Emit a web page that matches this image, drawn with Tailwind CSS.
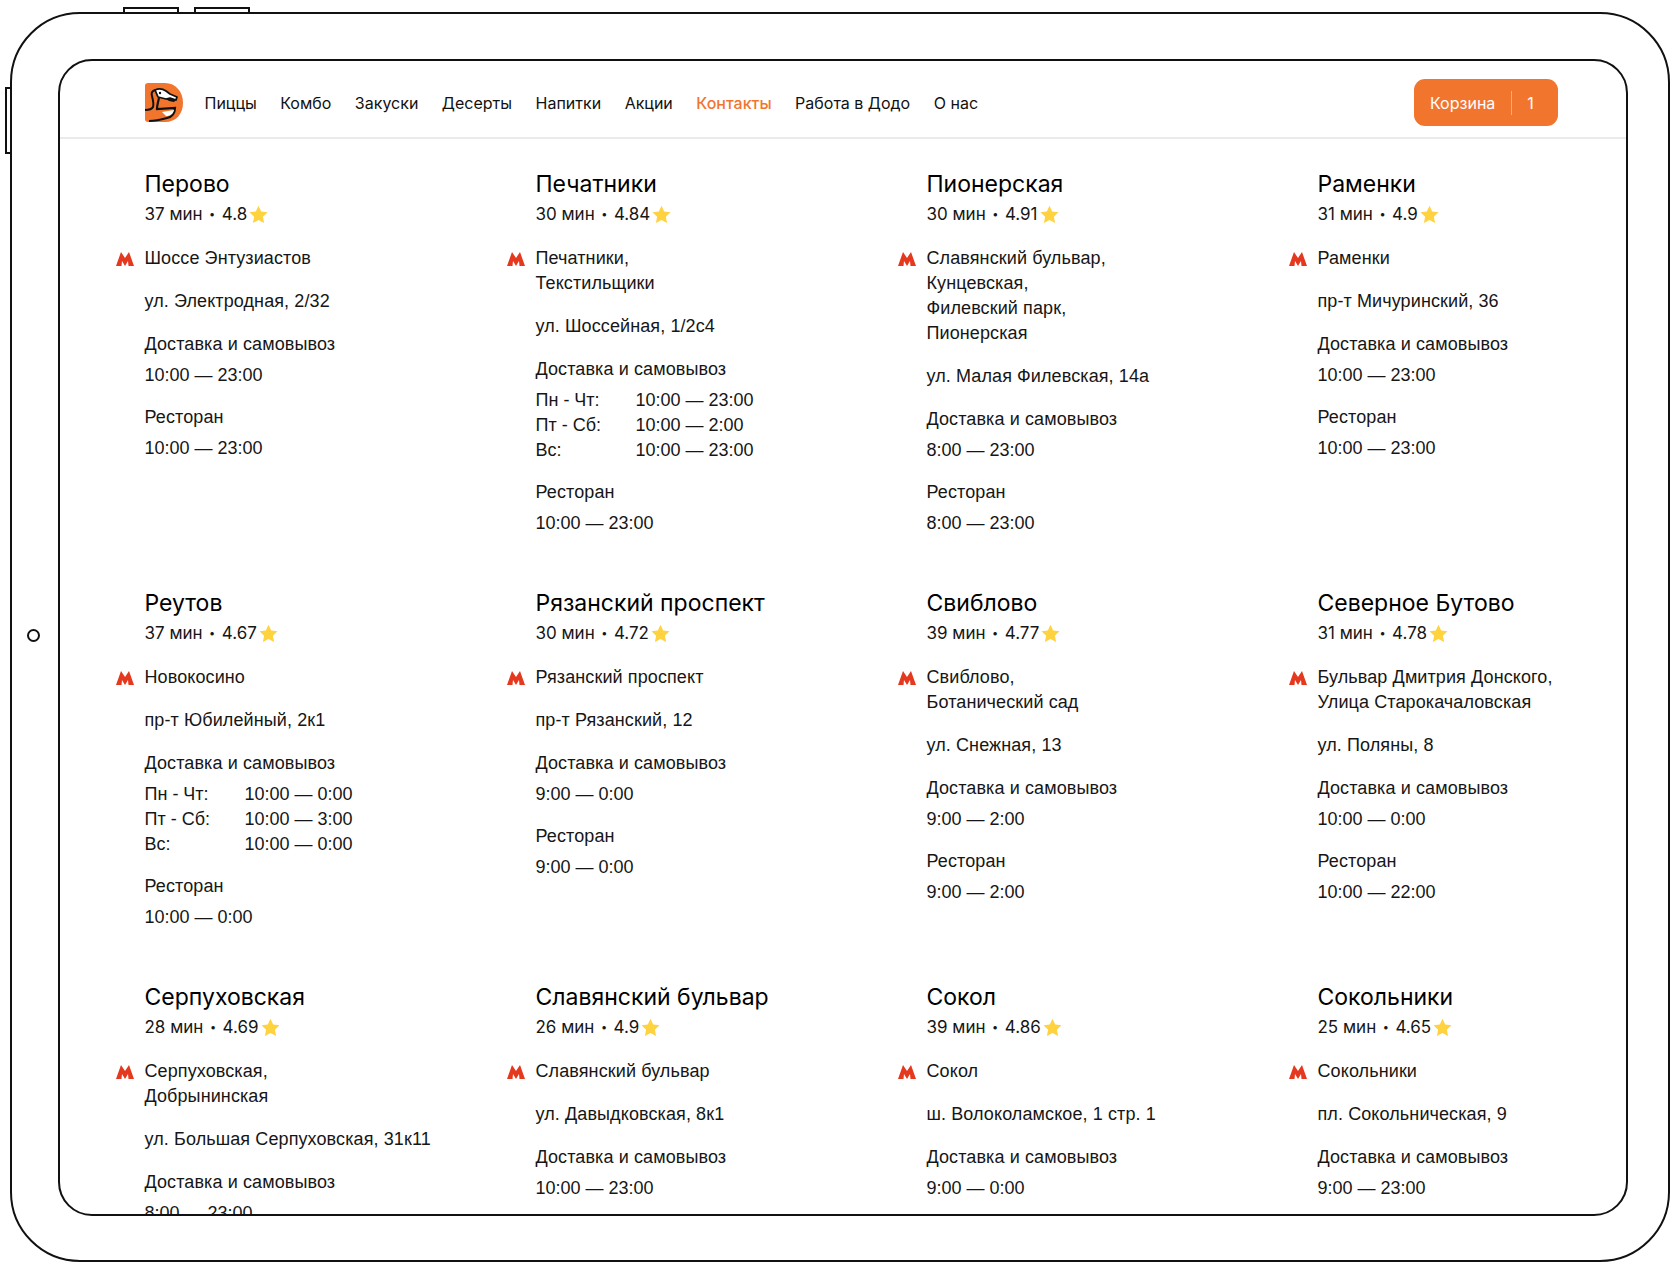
<!DOCTYPE html>
<html lang="ru">
    <head>
        <meta charset="UTF-8" />
        <meta name="viewport" content="width=device-width, initial-scale=1.0" />
        <title>Контакты</title>
        <script src="https://cdn.jsdelivr.net/npm/@tailwindcss/browser@4"></script>
    </head>
    <body class="bg-white h-[1275px] overflow-hidden font-['Liberation_Sans',sans-serif] text-[#161616]">
        <!-- Device frame -->
        <div class="relative ml-[10px] mt-[12px] w-[1660px] h-[1250px] border-2 border-[#111] rounded-[70px] pl-[46px] pt-[45px]">
            <div class="absolute left-[111px] top-[-7px] w-[56px] h-[6px] border-2 border-b-0 border-[#111]"></div>
            <div class="absolute left-[182px] top-[-7px] w-[56px] h-[6px] border-2 border-b-0 border-[#111]"></div>
            <div class="absolute left-[-7px] top-[73px] w-[6px] h-[67px] border-2 border-r-0 border-[#111]"></div>
            <div class="absolute left-[15px] top-[615px] w-[13px] h-[13px] border-2 border-[#111] rounded-full"></div>

            <!-- Screen -->
            <div class="w-[1570px] h-[1157px] border-2 border-[#111] rounded-[34px] overflow-hidden">
                <header class="flex items-center h-[78px] pt-[7px] pl-[84.5px] pr-[68px] border-b-2 border-[#ebebeb]">
                    <svg class="w-[38px] h-[40px] mr-[22px]" viewBox="0 0 38 40">
                        <path d="M3 0H20C31 0 38 9 38 20C38 31 31 39 20 39H3C1 39 0 38 0 36V3C0 1 1 0 3 0Z" fill="#f2752e" />
                        <path d="M10 7C14 5 18 6 21 8L25 11L32 14L31 17L25 15L21 16L13 14Z" fill="#fff" stroke="#111" stroke-width="1.800" stroke-linejoin="round" />
                        <path d="M21 16L25 15L31 17L29 19L24 18Z" fill="#111" />
                        <path d="M10 7C7 8 6 10 7 13C8 17 9 21 8 24C7 26 4 27 0 27" fill="none" stroke="#111" stroke-width="2" />
                        <path d="M14 15C13 19 12 23 12 26L30 25C30 30 27 34 22 35C15 37 9 38 4 38" fill="none" stroke="#111" stroke-width="2.200" />
                        <path d="M17 29L29 27C28 31 25 33 21 33Z" fill="#fff" />
                        <circle cx="15" cy="10" r="1.200" fill="#111" />
                    </svg>
                    <nav class="flex gap-[23.5px] text-[16px] font-['Inter',sans-serif] text-[#111]">
                        <a>Пиццы</a>
                        <a>Комбо</a>
                        <a>Закуски</a>
                        <a>Десерты</a>
                        <a>Напитки</a>
                        <a>Акции</a>
                        <a class="text-[#f2752e] font-medium">Контакты</a>
                        <a>Работа в Додо</a>
                        <a>О нас</a>
                    </nav>
                    <button class="ml-auto flex items-center w-[144px] h-[47px] pl-[16px] bg-[#f2752e] rounded-[11px] text-white text-[16px] font-['Inter',sans-serif]">
                        <span>Корзина</span>
                        <span class="ml-[16px] w-px h-[24px] bg-white/40"></span>
                        <span class="ml-[15px]">1</span>
                    </button>
                </header>

                <main class="grid grid-cols-[391px_391px_391px_391px] pl-[84.5px] pt-[30px] gap-y-[52px] text-[18px] leading-[25px] tracking-[0.1px]">
                    <!-- Row 1 -->
                    <section>
                        <h2 class="text-[23px] leading-[30px] font-['Inter',sans-serif] text-black tracking-normal">Перово</h2>
                        <p class="flex items-center gap-[3px] mt-[3px] text-[17px] font-['Inter',sans-serif] tracking-normal">37 мин <span class="text-[11px] mx-[3.5px]">•</span> 4.8 <svg class="w-[21px] h-[21px] -ml-[2px]" viewBox="0 0 24 24"><path d="M12 2l3.100 6.600 7.200 .9-5.300 5 1.400 7.200-6.400-3.500-6.400 3.500 1.400-7.200-5.300-5 7.200-.9z" fill="#ffd23f" /></svg></p>
                        <div class="relative mt-[19px]"><svg class="absolute left-[-29px] top-[6px] w-[18px] h-[14px]" viewBox="0 0 18 14"><path d="M0 14L5 0L9 6L13 0L18 14H12.500L12 9L9 14L6 9L5.500 14Z" fill="#e5391f" /></svg>Шоссе Энтузиастов</div>
                        <p class="mt-[18px]">ул. Электродная, 2/32</p>
                        <p class="mt-[18px]">Доставка и самовывоз</p>
                        <p class="mt-[6px] tracking-normal">10:00 — 23:00</p>
                        <p class="mt-[17px]">Ресторан</p>
                        <p class="mt-[6px] tracking-normal">10:00 — 23:00</p>
                    </section>
                    <section>
                        <h2 class="text-[23px] leading-[30px] font-['Inter',sans-serif] text-black tracking-normal">Печатники</h2>
                        <p class="flex items-center gap-[3px] mt-[3px] text-[17px] font-['Inter',sans-serif] tracking-normal">30 мин <span class="text-[11px] mx-[3.5px]">•</span> 4.84 <svg class="w-[21px] h-[21px] -ml-[2px]" viewBox="0 0 24 24"><path d="M12 2l3.100 6.600 7.200 .9-5.300 5 1.400 7.200-6.400-3.500-6.400 3.500 1.400-7.200-5.300-5 7.200-.9z" fill="#ffd23f" /></svg></p>
                        <div class="relative mt-[19px]"><svg class="absolute left-[-29px] top-[6px] w-[18px] h-[14px]" viewBox="0 0 18 14"><path d="M0 14L5 0L9 6L13 0L18 14H12.500L12 9L9 14L6 9L5.500 14Z" fill="#e5391f" /></svg>Печатники,<br />Текстильщики</div>
                        <p class="mt-[18px]">ул. Шоссейная, 1/2с4</p>
                        <p class="mt-[18px]">Доставка и самовывоз</p>
                        <div class="grid grid-cols-[100px_1fr] mt-[6px] tracking-normal"><span>Пн - Чт:</span><span>10:00 — 23:00</span><span>Пт - Сб:</span><span>10:00 — 2:00</span><span>Вс:</span><span>10:00 — 23:00</span></div>
                        <p class="mt-[17px]">Ресторан</p>
                        <p class="mt-[6px] tracking-normal">10:00 — 23:00</p>
                    </section>
                    <section>
                        <h2 class="text-[23px] leading-[30px] font-['Inter',sans-serif] text-black tracking-normal">Пионерская</h2>
                        <p class="flex items-center gap-[3px] mt-[3px] text-[17px] font-['Inter',sans-serif] tracking-normal">30 мин <span class="text-[11px] mx-[3.5px]">•</span> 4.91 <svg class="w-[21px] h-[21px] -ml-[2px]" viewBox="0 0 24 24"><path d="M12 2l3.100 6.600 7.200 .9-5.300 5 1.400 7.200-6.400-3.500-6.400 3.500 1.400-7.200-5.300-5 7.200-.9z" fill="#ffd23f" /></svg></p>
                        <div class="relative mt-[19px]"><svg class="absolute left-[-29px] top-[6px] w-[18px] h-[14px]" viewBox="0 0 18 14"><path d="M0 14L5 0L9 6L13 0L18 14H12.500L12 9L9 14L6 9L5.500 14Z" fill="#e5391f" /></svg>Славянский бульвар,<br />Кунцевская,<br />Филевский парк,<br />Пионерская</div>
                        <p class="mt-[18px]">ул. Малая Филевская, 14а</p>
                        <p class="mt-[18px]">Доставка и самовывоз</p>
                        <p class="mt-[6px] tracking-normal">8:00 — 23:00</p>
                        <p class="mt-[17px]">Ресторан</p>
                        <p class="mt-[6px] tracking-normal">8:00 — 23:00</p>
                    </section>
                    <section>
                        <h2 class="text-[23px] leading-[30px] font-['Inter',sans-serif] text-black tracking-normal">Раменки</h2>
                        <p class="flex items-center gap-[3px] mt-[3px] text-[17px] font-['Inter',sans-serif] tracking-normal">31 мин <span class="text-[11px] mx-[3.5px]">•</span> 4.9 <svg class="w-[21px] h-[21px] -ml-[2px]" viewBox="0 0 24 24"><path d="M12 2l3.100 6.600 7.200 .9-5.300 5 1.400 7.200-6.400-3.500-6.400 3.500 1.400-7.200-5.300-5 7.200-.9z" fill="#ffd23f" /></svg></p>
                        <div class="relative mt-[19px]"><svg class="absolute left-[-29px] top-[6px] w-[18px] h-[14px]" viewBox="0 0 18 14"><path d="M0 14L5 0L9 6L13 0L18 14H12.500L12 9L9 14L6 9L5.500 14Z" fill="#e5391f" /></svg>Раменки</div>
                        <p class="mt-[18px]">пр-т Мичуринский, 36</p>
                        <p class="mt-[18px]">Доставка и самовывоз</p>
                        <p class="mt-[6px] tracking-normal">10:00 — 23:00</p>
                        <p class="mt-[17px]">Ресторан</p>
                        <p class="mt-[6px] tracking-normal">10:00 — 23:00</p>
                    </section>

                    <!-- Row 2 -->
                    <section>
                        <h2 class="text-[23px] leading-[30px] font-['Inter',sans-serif] text-black tracking-normal">Реутов</h2>
                        <p class="flex items-center gap-[3px] mt-[3px] text-[17px] font-['Inter',sans-serif] tracking-normal">37 мин <span class="text-[11px] mx-[3.5px]">•</span> 4.67 <svg class="w-[21px] h-[21px] -ml-[2px]" viewBox="0 0 24 24"><path d="M12 2l3.100 6.600 7.200 .9-5.300 5 1.400 7.200-6.400-3.500-6.400 3.500 1.400-7.200-5.300-5 7.200-.9z" fill="#ffd23f" /></svg></p>
                        <div class="relative mt-[19px]"><svg class="absolute left-[-29px] top-[6px] w-[18px] h-[14px]" viewBox="0 0 18 14"><path d="M0 14L5 0L9 6L13 0L18 14H12.500L12 9L9 14L6 9L5.500 14Z" fill="#e5391f" /></svg>Новокосино</div>
                        <p class="mt-[18px]">пр-т Юбилейный, 2к1</p>
                        <p class="mt-[18px]">Доставка и самовывоз</p>
                        <div class="grid grid-cols-[100px_1fr] mt-[6px] tracking-normal"><span>Пн - Чт:</span><span>10:00 — 0:00</span><span>Пт - Сб:</span><span>10:00 — 3:00</span><span>Вс:</span><span>10:00 — 0:00</span></div>
                        <p class="mt-[17px]">Ресторан</p>
                        <p class="mt-[6px] tracking-normal">10:00 — 0:00</p>
                    </section>
                    <section>
                        <h2 class="text-[23px] leading-[30px] font-['Inter',sans-serif] text-black tracking-normal">Рязанский проспект</h2>
                        <p class="flex items-center gap-[3px] mt-[3px] text-[17px] font-['Inter',sans-serif] tracking-normal">30 мин <span class="text-[11px] mx-[3.5px]">•</span> 4.72 <svg class="w-[21px] h-[21px] -ml-[2px]" viewBox="0 0 24 24"><path d="M12 2l3.100 6.600 7.200 .9-5.300 5 1.400 7.200-6.400-3.500-6.400 3.500 1.400-7.200-5.300-5 7.200-.9z" fill="#ffd23f" /></svg></p>
                        <div class="relative mt-[19px]"><svg class="absolute left-[-29px] top-[6px] w-[18px] h-[14px]" viewBox="0 0 18 14"><path d="M0 14L5 0L9 6L13 0L18 14H12.500L12 9L9 14L6 9L5.500 14Z" fill="#e5391f" /></svg>Рязанский проспект</div>
                        <p class="mt-[18px]">пр-т Рязанский, 12</p>
                        <p class="mt-[18px]">Доставка и самовывоз</p>
                        <p class="mt-[6px] tracking-normal">9:00 — 0:00</p>
                        <p class="mt-[17px]">Ресторан</p>
                        <p class="mt-[6px] tracking-normal">9:00 — 0:00</p>
                    </section>
                    <section>
                        <h2 class="text-[23px] leading-[30px] font-['Inter',sans-serif] text-black tracking-normal">Свиблово</h2>
                        <p class="flex items-center gap-[3px] mt-[3px] text-[17px] font-['Inter',sans-serif] tracking-normal">39 мин <span class="text-[11px] mx-[3.5px]">•</span> 4.77 <svg class="w-[21px] h-[21px] -ml-[2px]" viewBox="0 0 24 24"><path d="M12 2l3.100 6.600 7.200 .9-5.300 5 1.400 7.200-6.400-3.500-6.400 3.500 1.400-7.200-5.300-5 7.200-.9z" fill="#ffd23f" /></svg></p>
                        <div class="relative mt-[19px]"><svg class="absolute left-[-29px] top-[6px] w-[18px] h-[14px]" viewBox="0 0 18 14"><path d="M0 14L5 0L9 6L13 0L18 14H12.500L12 9L9 14L6 9L5.500 14Z" fill="#e5391f" /></svg>Свиблово,<br />Ботанический сад</div>
                        <p class="mt-[18px]">ул. Снежная, 13</p>
                        <p class="mt-[18px]">Доставка и самовывоз</p>
                        <p class="mt-[6px] tracking-normal">9:00 — 2:00</p>
                        <p class="mt-[17px]">Ресторан</p>
                        <p class="mt-[6px] tracking-normal">9:00 — 2:00</p>
                    </section>
                    <section>
                        <h2 class="text-[23px] leading-[30px] font-['Inter',sans-serif] text-black tracking-normal">Северное Бутово</h2>
                        <p class="flex items-center gap-[3px] mt-[3px] text-[17px] font-['Inter',sans-serif] tracking-normal">31 мин <span class="text-[11px] mx-[3.5px]">•</span> 4.78 <svg class="w-[21px] h-[21px] -ml-[2px]" viewBox="0 0 24 24"><path d="M12 2l3.100 6.600 7.200 .9-5.300 5 1.400 7.200-6.400-3.500-6.400 3.500 1.400-7.200-5.300-5 7.200-.9z" fill="#ffd23f" /></svg></p>
                        <div class="relative mt-[19px]"><svg class="absolute left-[-29px] top-[6px] w-[18px] h-[14px]" viewBox="0 0 18 14"><path d="M0 14L5 0L9 6L13 0L18 14H12.500L12 9L9 14L6 9L5.500 14Z" fill="#e5391f" /></svg>Бульвар Дмитрия Донского,<br />Улица Старокачаловская</div>
                        <p class="mt-[18px]">ул. Поляны, 8</p>
                        <p class="mt-[18px]">Доставка и самовывоз</p>
                        <p class="mt-[6px] tracking-normal">10:00 — 0:00</p>
                        <p class="mt-[17px]">Ресторан</p>
                        <p class="mt-[6px] tracking-normal">10:00 — 22:00</p>
                    </section>

                    <!-- Row 3, cut off by the screen edge -->
                    <section>
                        <h2 class="text-[23px] leading-[30px] font-['Inter',sans-serif] text-black tracking-normal">Серпуховская</h2>
                        <p class="flex items-center gap-[3px] mt-[3px] text-[17px] font-['Inter',sans-serif] tracking-normal">28 мин <span class="text-[11px] mx-[3.5px]">•</span> 4.69 <svg class="w-[21px] h-[21px] -ml-[2px]" viewBox="0 0 24 24"><path d="M12 2l3.100 6.600 7.200 .9-5.300 5 1.400 7.200-6.400-3.500-6.400 3.500 1.400-7.200-5.300-5 7.200-.9z" fill="#ffd23f" /></svg></p>
                        <div class="relative mt-[19px]"><svg class="absolute left-[-29px] top-[6px] w-[18px] h-[14px]" viewBox="0 0 18 14"><path d="M0 14L5 0L9 6L13 0L18 14H12.500L12 9L9 14L6 9L5.500 14Z" fill="#e5391f" /></svg>Серпуховская,<br />Добрынинская</div>
                        <p class="mt-[18px]">ул. Большая Серпуховская, 31к11</p>
                        <p class="mt-[18px]">Доставка и самовывоз</p>
                        <p class="mt-[6px] tracking-normal">8:00 — 23:00</p>
                    </section>
                    <section>
                        <h2 class="text-[23px] leading-[30px] font-['Inter',sans-serif] text-black tracking-normal">Славянский бульвар</h2>
                        <p class="flex items-center gap-[3px] mt-[3px] text-[17px] font-['Inter',sans-serif] tracking-normal">26 мин <span class="text-[11px] mx-[3.5px]">•</span> 4.9 <svg class="w-[21px] h-[21px] -ml-[2px]" viewBox="0 0 24 24"><path d="M12 2l3.100 6.600 7.200 .9-5.300 5 1.400 7.200-6.400-3.500-6.400 3.500 1.400-7.200-5.300-5 7.200-.9z" fill="#ffd23f" /></svg></p>
                        <div class="relative mt-[19px]"><svg class="absolute left-[-29px] top-[6px] w-[18px] h-[14px]" viewBox="0 0 18 14"><path d="M0 14L5 0L9 6L13 0L18 14H12.500L12 9L9 14L6 9L5.500 14Z" fill="#e5391f" /></svg>Славянский бульвар</div>
                        <p class="mt-[18px]">ул. Давыдковская, 8к1</p>
                        <p class="mt-[18px]">Доставка и самовывоз</p>
                        <p class="mt-[6px] tracking-normal">10:00 — 23:00</p>
                    </section>
                    <section>
                        <h2 class="text-[23px] leading-[30px] font-['Inter',sans-serif] text-black tracking-normal">Сокол</h2>
                        <p class="flex items-center gap-[3px] mt-[3px] text-[17px] font-['Inter',sans-serif] tracking-normal">39 мин <span class="text-[11px] mx-[3.5px]">•</span> 4.86 <svg class="w-[21px] h-[21px] -ml-[2px]" viewBox="0 0 24 24"><path d="M12 2l3.100 6.600 7.200 .9-5.300 5 1.400 7.200-6.400-3.500-6.400 3.500 1.400-7.200-5.300-5 7.200-.9z" fill="#ffd23f" /></svg></p>
                        <div class="relative mt-[19px]"><svg class="absolute left-[-29px] top-[6px] w-[18px] h-[14px]" viewBox="0 0 18 14"><path d="M0 14L5 0L9 6L13 0L18 14H12.500L12 9L9 14L6 9L5.500 14Z" fill="#e5391f" /></svg>Сокол</div>
                        <p class="mt-[18px]">ш. Волоколамское, 1 стр. 1</p>
                        <p class="mt-[18px]">Доставка и самовывоз</p>
                        <p class="mt-[6px] tracking-normal">9:00 — 0:00</p>
                    </section>
                    <section>
                        <h2 class="text-[23px] leading-[30px] font-['Inter',sans-serif] text-black tracking-normal">Сокольники</h2>
                        <p class="flex items-center gap-[3px] mt-[3px] text-[17px] font-['Inter',sans-serif] tracking-normal">25 мин <span class="text-[11px] mx-[3.5px]">•</span> 4.65 <svg class="w-[21px] h-[21px] -ml-[2px]" viewBox="0 0 24 24"><path d="M12 2l3.100 6.600 7.200 .9-5.300 5 1.400 7.200-6.400-3.500-6.400 3.500 1.400-7.200-5.300-5 7.200-.9z" fill="#ffd23f" /></svg></p>
                        <div class="relative mt-[19px]"><svg class="absolute left-[-29px] top-[6px] w-[18px] h-[14px]" viewBox="0 0 18 14"><path d="M0 14L5 0L9 6L13 0L18 14H12.500L12 9L9 14L6 9L5.500 14Z" fill="#e5391f" /></svg>Сокольники</div>
                        <p class="mt-[18px]">пл. Сокольническая, 9</p>
                        <p class="mt-[18px]">Доставка и самовывоз</p>
                        <p class="mt-[6px] tracking-normal">9:00 — 23:00</p>
                    </section>
                </main>
            </div>
        </div>
    </body>
</html>
